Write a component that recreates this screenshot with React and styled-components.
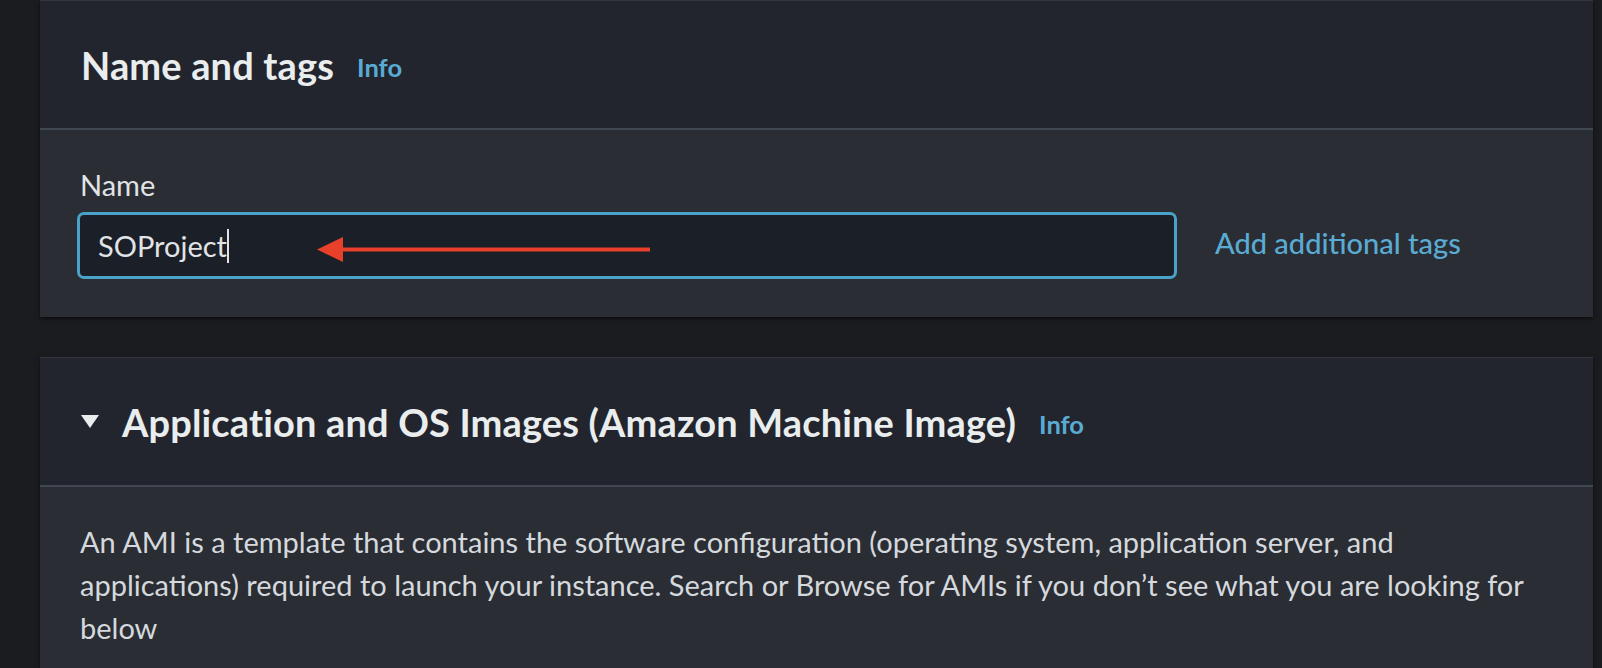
import React from "react";
import styled, { createGlobalStyle } from "styled-components";

const GlobalStyle = createGlobalStyle`
  html, body {
    margin: 0;
    padding: 0;
    background: #1b1c20;
  }
  body {
    font-family: Lato, "Open Sans", sans-serif;
    -webkit-font-smoothing: antialiased;
  }
`;

export default function App() {
  return (
    <>
      <GlobalStyle />
      <Page>
        <Card>
          <Header>
            <Title>Name and tags</Title>
            <InfoLink>Info</InfoLink>
          </Header>
          <Body>
            <Label>Name</Label>
            <FieldRow>
              <InputBox role="textbox" aria-label="Name">
                <InputText>SOProject</InputText>
                <Caret />
                <Arrow width="333" height="25" viewBox="0 0 333 25">
                  <polygon points="0,12.5 26,0 26,25" fill="#e8402a" />
                  <rect x="25" y="10.5" width="308" height="4" fill="#e8402a" />
                </Arrow>
              </InputBox>
              <TagsLink>Add additional tags</TagsLink>
            </FieldRow>
          </Body>
        </Card>

        <Card $grow>
          <Header>
            <Toggle width="18" height="13" viewBox="0 0 18 13">
              <polygon points="0,0 18,0 9,13" fill="#eaeded" />
            </Toggle>
            <Title>Application and OS Images (Amazon Machine Image)</Title>
            <InfoLink>Info</InfoLink>
          </Header>
          <TextBody>
            <Paragraph>
              An AMI is a template that contains the software configuration
              (operating system, application server, and applications) required
              to launch your instance. Search or Browse for AMIs if you don’t see
              what you are looking for below
            </Paragraph>
          </TextBody>
        </Card>
      </Page>
    </>
  );
}

const Page = styled.div`
  display: flex;
  flex-direction: column;
  gap: 40px;
  padding: 0 9px 0 40px;
  height: 668px;
  overflow: hidden;
  box-sizing: border-box;
`;

const Card = styled.section`
  background: #2a2d33;
  border-top: 1px solid #32363d;
  box-shadow: 0 2px 4px rgba(0, 0, 0, 0.55);
  flex-shrink: 0;
  flex-grow: ${(p) => (p.$grow ? 1 : 0)};
`;

const Header = styled.div`
  display: flex;
  align-items: center;
  height: 127px;
  padding: 0 37px 0 41px;
  background: #22252d;
  border-bottom: 2px solid #414750;
`;

const Title = styled.h2`
  margin: 0;
  font-family: Lato, sans-serif;
  font-weight: 700;
  font-size: 38px;
  letter-spacing: 0.15px;
  color: #eaeded;
`;

const InfoLink = styled.a`
  margin-left: 23px;
  margin-top: 4px;
  font-family: Lato, sans-serif;
  font-weight: 700;
  font-size: 25.5px;
  color: #5aabd3;
  cursor: pointer;
`;

const Toggle = styled.svg`
  display: block;
  margin-right: 23px;
  flex-shrink: 0;
`;

const Body = styled.div`
  padding: 38px 37px 38px 37px;
`;

const Label = styled.div`
  font-family: Lato, sans-serif;
  font-size: 29px;
  color: #e1e4e6;
  padding-left: 3px;
  margin-bottom: 10px;
  line-height: 34px;
`;

const FieldRow = styled.div`
  display: flex;
  align-items: center;
  gap: 38px;
`;

const InputBox = styled.div`
  position: relative;
  display: flex;
  align-items: center;
  width: 1100px;
  height: 67px;
  box-sizing: border-box;
  border: 3px solid #4ba2c8;
  border-radius: 7px;
  background: #1b1f27;
  padding: 0 18px;
`;

const InputText = styled.span`
  font-family: Lato, sans-serif;
  font-size: 29px;
  color: #e1e4e6;
`;

const Caret = styled.span`
  display: inline-block;
  width: 2px;
  height: 34px;
  margin-left: 0;
  background: #e1e4e6;
`;

const Arrow = styled.svg`
  position: absolute;
  left: 237px;
  top: 22px;
`;

const TagsLink = styled.a`
  font-family: Lato, sans-serif;
  font-size: 29px;
  font-weight: 500;
  color: #5aabd3;
  cursor: pointer;
  margin-bottom: 7px;
`;

const TextBody = styled.div`
  padding: 33px 58px 0 40px;
`;

const Paragraph = styled.p`
  margin: 0;
  font-family: Lato, sans-serif;
  font-size: 29px;
  line-height: 43px;
  color: #d5d9dd;
`;
